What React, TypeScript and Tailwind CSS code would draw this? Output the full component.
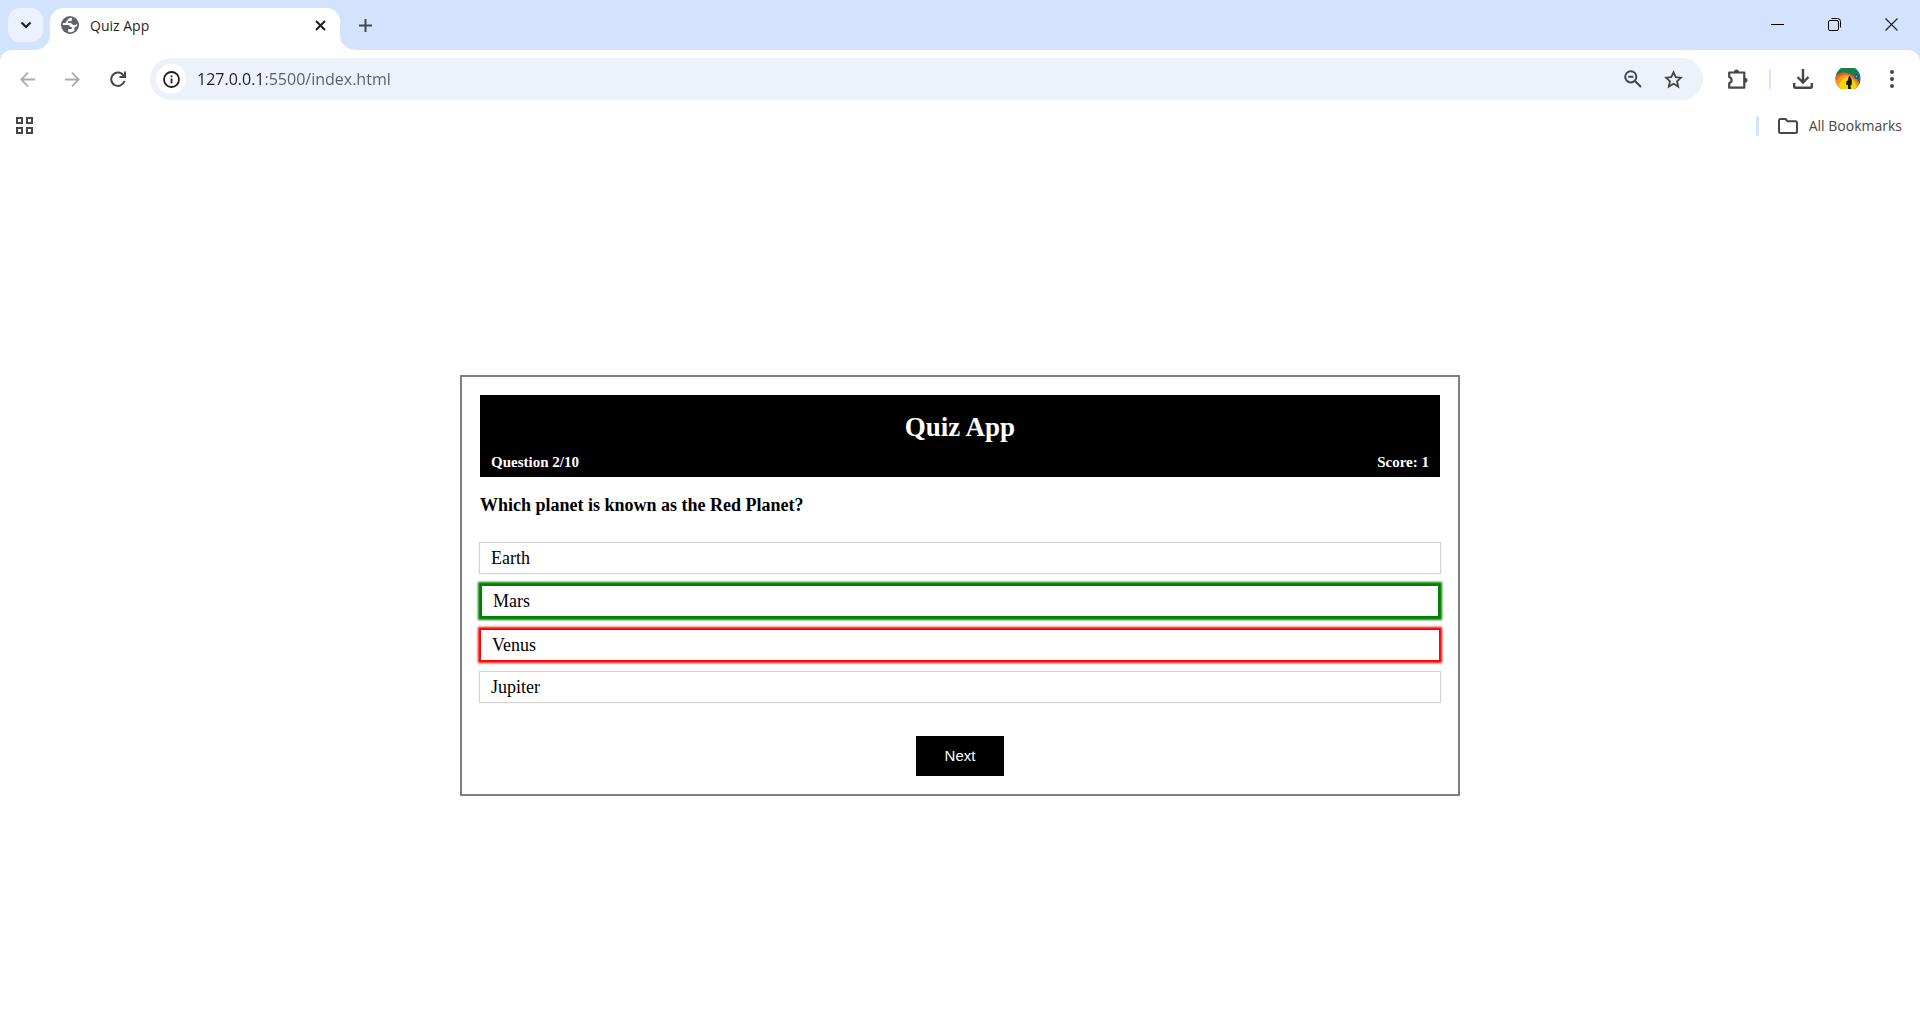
import React, { useState } from "react";

type Status = "idle" | "correct" | "wrong";

const OPTIONS: { label: string; status: Status }[] = [
  { label: "Earth", status: "idle" },
  { label: "Mars", status: "correct" },
  { label: "Venus", status: "wrong" },
  { label: "Jupiter", status: "idle" },
];

const STATUS_CLASS: Record<Status, string> = {
  idle: "shadow-[0_0_1px_1px_lightgray]",
  correct: "border-2 border-[#008000] shadow-[0_0_2px_2px_green]",
  wrong: "border border-[#ff0000] shadow-[0_0_2px_2px_red]",
};

function TabStrip() {
  return (
    <div className="flex h-[50px] items-end bg-[#d3e3fd]">
      <button
        aria-label="Search tabs"
        className="mb-2 ml-2 flex h-[34px] w-[35px] items-center justify-center rounded-xl bg-[#ebf1fe]"
      >
        <svg width="12" height="8" viewBox="0 0 12 8" fill="none" stroke="#1f1f1f" strokeWidth="2.2">
          <path d="M1.5 1.5 6 6l4.500-4.500" />
        </svg>
      </button>
      <svg className="-ml-2" width="15" height="15" viewBox="0 0 15 15" fill="#fff">
        <path d="M15 0v15H0A15 15 0 0 0 15 0Z" />
      </svg>
      <div className="flex h-[42px] w-[290px] items-center rounded-t-[14px] bg-white pb-2 pl-[11px] pr-3">
        <svg width="18" height="18" viewBox="0 0 18 18">
          <circle cx="9" cy="9" r="9" fill="#5f6368" />
          <path
            d="M9.200 1.800C6.800 2.200 7.500 4 6.200 4.400 4.900 4.800 5.200 6.400 4.500 7H2.100C1.900 7.700 1.800 8.300 1.800 9h5.100c1.400 0 2.100.8 2.100 2h1.800v1.900H7.200v3c2 .6 4.500.2 6.200-1.200l-.1-2.500c0-1.200 1.200-1.500 2.700-2 .2-.7.200-1.400.1-2.100-1.700 1-2.500 1.200-4 .6-1.200-.5-1.400-1.800-2.700-1.800H7V5.300h2.200c1 0 1.800-.7 1.800-1.800V2c-.6-.2-1.200-.3-1.800-.2Z"
            fill="#fff"
          />
        </svg>
        <span className="ml-[11px] flex-1 font-['Open_Sans',sans-serif] text-[14px] text-[#1f1f1f]">Quiz App</span>
        <button aria-label="Close tab" className="flex size-4 items-center justify-center">
          <svg width="11" height="11" viewBox="0 0 11 11" stroke="#1f1f1f" strokeWidth="2">
            <path d="m1 1 9 9M10 1l-9 9" />
          </svg>
        </button>
      </div>
      <svg width="15" height="15" viewBox="0 0 15 15" fill="#fff">
        <path d="M0 0v15h15A15 15 0 0 1 0 0Z" />
      </svg>
      <button aria-label="New tab" className="mb-[18px] ml-1 flex size-[13px] items-center">
        <svg width="13" height="13" viewBox="0 0 13 13" stroke="#444746" strokeWidth="2">
          <path d="M6.500 0v13M0 6.500h13" />
        </svg>
      </button>
      <div className="mb-[18px] ml-auto mr-[22px] flex items-center gap-[42px]">
        <button aria-label="Minimize" className="flex size-[14px] items-center justify-center">
          <svg width="13" height="13" viewBox="0 0 13 13" stroke="#000">
            <path d="M0 6.500h13" />
          </svg>
        </button>
        <button aria-label="Restore" className="flex size-4 items-center justify-center">
          <svg width="13" height="13" viewBox="0 0 13 13" fill="none" stroke="#000">
            <rect x=".5" y="2.500" width="10" height="10" rx="1.500" />
            <path d="M3.500.5h6A3 3 0 0 1 12.500 3.500v6" />
          </svg>
        </button>
        <button aria-label="Close window" className="flex size-[14px] items-center justify-center">
          <svg width="13" height="13" viewBox="0 0 13 13" stroke="#1f1f1f" strokeWidth="1.200">
            <path d="m.5.5 12 12M12.500.5l-12 12" />
          </svg>
        </button>
      </div>
    </div>
  );
}

function Avatar() {
  return (
    <svg width="26" height="24" viewBox="0 0 26 24">
      <clipPath id="face">
        <path d="M6 1h14q5.500 4 5.500 10.500T20 22H6Q.5 18 .5 11.500T6 1Z" />
      </clipPath>
      <g clipPath="url(#face)">
        <rect width="26" height="24" fill="#1c7d4d" />
        <path d="M0 10Q6 4 13 6q9 4 13 12v6H0Z" fill="#e8622a" />
        <path d="M0 15Q6 6 13 8q8 4 12 12v4H0Z" fill="#f79a1a" />
        <path d="M2 24Q5 11 13 9q7 3 10 15Z" fill="#efd50f" />
        <path d="M4 22h18v2H4Z" fill="#3c4410" />
        <circle cx="21.500" cy="9.500" r="2.200" fill="#1b50b8" />
        <circle cx="21.500" cy="9.500" r=".8" fill="#9fd0d8" />
        <path d="M13 22v-4l-2-.5.5-3 1.500-1.500.5-3 1.200-1 1.300 2 1 3-.5 4-1 .5.5 3.500Z" fill="#14170c" />
      </g>
    </svg>
  );
}

function Toolbar() {
  const [url, setUrl] = useState("127.0.0.1:5500/index.html");
  return (
    <div className="bg-[#d3e3fd]">
      <div className="flex h-[58px] items-center rounded-t-xl bg-white pl-5 pr-[26px]">
        <div className="flex gap-[30px]">
          <button aria-label="Back">
            <svg width="15" height="15" viewBox="0 0 15 15" fill="none" stroke="#a9abac" strokeWidth="1.800">
              <path d="M15 7.500H1.500M8 .700 1.200 7.500 8 14.300" />
            </svg>
          </button>
          <button aria-label="Forward">
            <svg width="15" height="15" viewBox="0 0 15 15" fill="none" stroke="#a9abac" strokeWidth="1.800">
              <path d="M0 7.500h13.500M7 .700l6.800 6.800L7 14.300" />
            </svg>
          </button>
          <button aria-label="Reload">
            <svg width="16" height="16" viewBox="0 0 16 16" fill="none" stroke="#444746" strokeWidth="2">
              <path d="M13.800 5A6.700 6.700 0 1 0 14.400 10M15 .5V6H9.500" />
            </svg>
          </button>
        </div>
        <div className="ml-6 flex h-[42px] flex-1 items-center rounded-full bg-[#ecf1fa] pl-[6px] pr-5">
          <button aria-label="Site information" className="flex size-[30px] items-center justify-center rounded-full bg-white">
            <svg width="17" height="17" viewBox="0 0 17 17" fill="none" stroke="#1f1f1f" strokeWidth="1.800">
              <circle cx="8.500" cy="8.500" r="7.500" />
              <path d="M8.500 7.500v5M8.500 4.500v1.800" />
            </svg>
          </button>
          <input
            aria-label="Address"
            value={url}
            onChange={(e) => setUrl(e.target.value)}
            className="ml-[11px] min-w-0 flex-1 bg-[linear-gradient(to_right,#1f1f1f_68px,#5a5d60_68px)] bg-clip-text font-['Open_Sans',sans-serif] text-[16px] leading-6 text-transparent caret-black outline-none"
          />
          <div className="flex items-center gap-[22px]">
            <button aria-label="Zoom">
              <svg width="18" height="18" viewBox="0 0 18 18" fill="none" stroke="#444746" strokeWidth="2">
                <circle cx="6.800" cy="6.800" r="5.600" />
                <path d="m11 11 6 6M4.200 6.800h5.200" />
              </svg>
            </button>
            <button aria-label="Bookmark this tab">
              <svg width="19" height="19" viewBox="0 0 19 19" fill="none" stroke="#444746" strokeWidth="1.800">
                <path d="m9.500 2.200 2.200 5 5.300.5-4 3.600 1.200 5.300-4.700-2.800-4.700 2.800L6 11.300 2 7.700l5.300-.5Z" />
              </svg>
            </button>
          </div>
        </div>
        <div className="ml-6 flex items-center">
          <button aria-label="Extensions">
            <svg width="21" height="21" viewBox="0 0 21 21">
              <path
                d="M2.200 3.500h15.100v15.200H2.200v-4.500a3.200 3.200 0 0 0 0-6.200Z"
                fill="none"
                stroke="#444746"
                strokeWidth="2.200"
                strokeLinejoin="round"
              />
              <path d="M7 3a2.500 2.500 0 0 1 5 0ZM18 8.700a2.500 2.500 0 0 1 0 5Z" fill="#444746" />
            </svg>
          </button>
          <span className="ml-[21px] h-5 w-0.5 bg-[#d3e3fd]" />
          <button aria-label="Downloads" className="ml-[22px]">
            <svg width="20" height="20" viewBox="0 0 20 20" fill="none" stroke="#444746" strokeWidth="2.400">
              <path d="M10 0v13M4.500 8l5.500 5.500L15.500 8M1.200 14v3.500q0 1.300 1.300 1.300h15q1.300 0 1.300-1.300V14" />
            </svg>
          </button>
          <button aria-label="Profile" className="ml-[22px]">
            <Avatar />
          </button>
          <button aria-label="Menu" className="ml-[29px]">
            <svg width="4" height="18" viewBox="0 0 4 18" fill="#444746">
              <circle cx="2" cy="2" r="2" />
              <circle cx="2" cy="9" r="2" />
              <circle cx="2" cy="16" r="2" />
            </svg>
          </button>
        </div>
      </div>
    </div>
  );
}

function BookmarksBar() {
  return (
    <div className="flex h-[43px] items-center bg-white pb-2 pl-4 pr-[18px]">
      <button aria-label="Apps">
        <svg width="18" height="18" viewBox="0 0 18 18" fill="none" stroke="#444746" strokeWidth="2">
          <path d="M1 1h5v5H1ZM11 1h5v5h-5ZM1 11h5v5H1ZM11 11h5v5h-5Z" />
        </svg>
      </button>
      <span className="ml-auto h-5 w-[3px] rounded-sm bg-[#d3e3fd]" />
      <button className="ml-[19px] flex items-center gap-[11px] font-['Open_Sans',sans-serif] text-[14px] leading-5 text-[#444746]">
        <svg width="20" height="16" viewBox="0 0 20 16" fill="none" stroke="#444746" strokeWidth="2">
          <path d="M1 2.500Q1 1 2.500 1h5l2 2.200h8q1.500 0 1.500 1.500V13.500q0 1.500-1.500 1.500h-15Q1 15 1 13.500Z" />
        </svg>
        All Bookmarks
      </button>
    </div>
  );
}

function Quiz() {
  return (
    <main className="flex flex-1 items-center justify-center bg-white font-['Liberation_Serif',serif] text-black">
      <section className="w-full max-w-[1000px] border-2 border-[#808080] p-[18px]">
        <header className="bg-black px-[11px] pb-1 pt-4 font-bold text-white">
          <h1 className="text-center text-[27px] leading-8">Quiz App</h1>
          <div className="flex justify-between pt-2 text-[15px] leading-[22px]">
            <span>Question 2/10</span>
            <span>Score: 1</span>
          </div>
        </header>
        <h2 className="pt-4 text-[18px] font-bold leading-6">Which planet is known as the Red Planet?</h2>
        <ul className="mt-[26px] flex flex-col gap-[11px] text-[18px]">
          {OPTIONS.map((o) => (
            <li key={o.label} className="flex">
              <button className={"flex-1 px-[11px] text-left leading-[30px] " + STATUS_CLASS[o.status]}>{o.label}</button>
            </li>
          ))}
        </ul>
        <div className="mt-[34px] flex justify-center">
          <button className="h-10 w-[88px] bg-black font-['Liberation_Sans',sans-serif] text-[15px] text-white">Next</button>
        </div>
      </section>
    </main>
  );
}

export default function App() {
  return (
    <div className="flex min-h-screen flex-col">
      <TabStrip />
      <Toolbar />
      <BookmarksBar />
      <Quiz />
    </div>
  );
}
